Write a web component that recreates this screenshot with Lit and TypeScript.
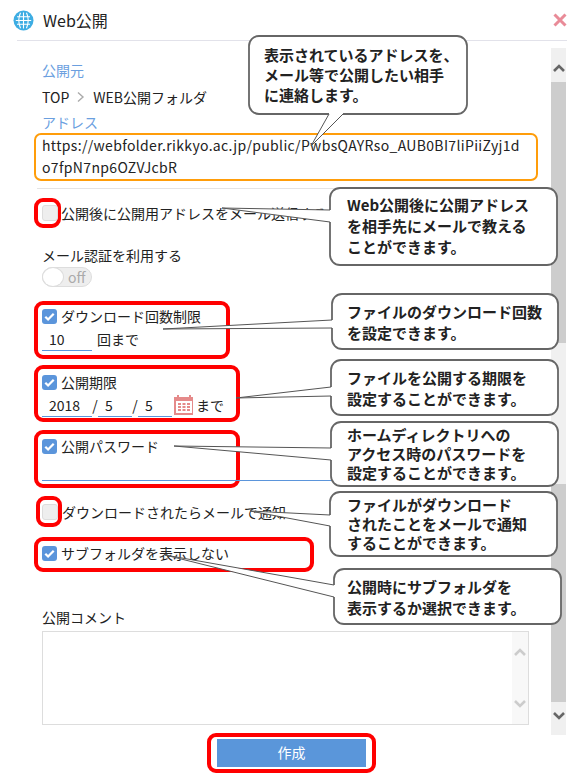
import { LitElement, html, css, svg } from "lit";
import { customElement } from "lit/decorators.js";

interface Callout { x: number; y: number; w: number; h: number; lines: string[]; a: number[]; tip: number[]; b: number[]; lh: number; py: number; tx: number; }

const callouts: Callout[] = [
  { x: 249, y: 36, w: 218, h: 78, tx: 15, py: 9, lh: 20, lines: ["表示されているアドレスを、", "メール等で公開したい相手", "に連絡します。"], a: [329, 114], tip: [311, 146], b: [343, 114] },
  { x: 330, y: 188, w: 227, h: 77, tx: 17, py: 6, lh: 21, lines: ["Web公開後に公開アドレス", "を相手先にメールで教える", "ことができます。"], a: [330, 210], tip: [222, 208], b: [330, 222] },
  { x: 332, y: 294, w: 226, h: 55, tx: 15, py: 7, lh: 21, lines: ["ファイルのダウンロード回数", "を設定できます。"], a: [332, 320], tip: [163, 329], b: [332, 328] },
  { x: 331, y: 360, w: 227, h: 55, tx: 16, py: 7, lh: 21, lines: ["ファイルを公開する期限を", "設定することができます。"], a: [331, 387], tip: [236, 398], b: [331, 396] },
  { x: 331, y: 422, w: 227, h: 64, tx: 16, py: 3, lh: 19, lines: ["ホームディレクトリへの", "アクセス時のパスワードを", "設定することができます。"], a: [331, 448], tip: [174, 446], b: [331, 460] },
  { x: 330, y: 492, w: 227, h: 64, tx: 17, py: 3, lh: 19, lines: ["ファイルがダウンロード", "されたことをメールで通知", "することができます。"], a: [330, 515], tip: [250, 511], b: [330, 526] },
  { x: 334, y: 569, w: 227, h: 55, tx: 13, py: 7, lh: 21, lines: ["公開時にサブフォルダを", "表示するか選択できます。"], a: [334, 585], tip: [165, 555], b: [334, 597] },
];

@customElement("app-root")
export class AppRoot extends LitElement {
  static styles = css`
    :host { display: block; position: relative; width: 582px; height: 778px; background: #fff; overflow: hidden;
      font-family: "Noto Sans CJK JP", "Noto Sans", sans-serif; font-size: 14px; color: #222; line-height: 20px; }
    .header { display: flex; align-items: center; height: 40px; padding-left: 13px; padding-right: 15px; gap: 9px; box-sizing: border-box; }
    .title { font-size: 16px; flex: 1; }
    .rule { height: 1px; margin-left: 17px; width: 550px; background: #e2e2ea; }
    .body { display: flex; margin-top: 7px; }
    .left { width: 551px; flex: none; }
    .content { padding-left: 42px; display: flex; flex-direction: column; align-items: flex-start; }
    .blue { color: #6b9fdf; }
    .crumb { display: flex; align-items: center; gap: 7px; }
    .url { margin-left: -8px; width: 504px; height: 48px; box-sizing: border-box; border: 2px solid #ff9d0a; border-radius: 7px; padding: 0 0 2px 6px; line-height: 22px; display: flex; align-items: center; letter-spacing: 0.34px; white-space: nowrap; }
    .sep { height: 1px; background: #e4e4e4; width: 514px; margin-left: -5px; }
    .row { display: flex; align-items: center; white-space: nowrap; }
    .hl { border: 4px solid #f00; border-radius: 9px; box-sizing: border-box; margin-left: -8px; padding-left: 4px; }
    .mini { width: 27px; height: 30px; display: flex; align-items: center; flex: none; }
    .mini2 { height: 31px; width: 26px; margin-left: -6px; padding-left: 2px; }
    .box { width: 15px; height: 15px; border-radius: 3px; background: #5b95db; display: block; flex: none; }
    .off { width: 16px; height: 16px; border-radius: 3px; background: #eee; border: 1px solid #ddd; box-sizing: border-box; flex: none; }
    .toggle { width: 50px; height: 20px; border-radius: 10px; background: #eee; border: 1px solid #ddd; box-sizing: border-box; display: flex; align-items: center; color: #aaa; font-size: 14px; }
    .knob { width: 20px; height: 18px; background: #fff; border-radius: 50%; margin-right: 5px; box-shadow: 0 0 0 1px #ddd; }
    .checkline { display: flex; align-items: center; gap: 4px; height: 20px; }
    .inputs { display: flex; align-items: center; height: 25px; white-space: nowrap; }
    .field { height: 22px; border-bottom: 1px solid #5b95db; padding: 2px 0 0 7px; line-height: 22px; }
    .w50 { width: 43px; } .w34 { width: 27px; }
    .slash { width: 6px; text-align: center; }
    .pw { width: 487px; height: 24px; padding: 0; margin-left: 0; }
    .comment { width: 487px; height: 94px; border: 1px solid #ddd; box-sizing: border-box; display: flex; justify-content: flex-end; }
    .cbar { width: 16px; background: #f8f8f8; display: flex; flex-direction: column; align-items: center; justify-content: space-between; padding: 14px 0 14px; box-sizing: border-box; }
    .footer { display: flex; padding-left: 207px; margin-top: 8px; }
    .btnwrap { width: 169px; height: 40px; border: 4px solid #f00; border-radius: 9px; box-sizing: border-box; padding: 2px 6px; }
    .btn { display: flex; align-items: center; justify-content: center; height: 100%; box-sizing: border-box; padding-bottom: 2px; background: #5a96da; color: #fff; font-size: 14px; }
    .scroll { width: 15px; height: 687px; background: #f0f0f0; display: flex; flex-direction: column; flex: none; }
    .arrow { display: flex; justify-content: center; align-items: center; flex: none; height: 34px; box-sizing: border-box; padding-top: 8px; }
    .arrow.bottom { height: 33px; padding: 0 0 8px; }
    .thumb { background: #cdcdcd; flex: none; }
    .gap { flex: none; }
    .cal { margin: 0 2px; flex: none; }
    .overlay { position: absolute; left: 0; top: 0; width: 582px; height: 778px; pointer-events: none; }
    .bubble { position: absolute; font-weight: 700; font-size: 15px; color: #222; white-space: nowrap; }
  `;

  private check() {
    return html`<svg class="box" viewBox="0 0 16 16"><path d="M3.5 8.2l3 3 6-6.2" fill="none" stroke="#fff" stroke-width="2.4"/></svg>`;
  }
  private chevron(dir: "up" | "down", color: string) {
    const d = dir === "up" ? "M2 9l5-5 5 5" : "M2 5l5 5 5-5";
    return html`<svg width="14" height="14" viewBox="0 0 14 14"><path d=${d} fill="none" stroke=${color} stroke-width="2.6"/></svg>`;
  }
  private tails() {
    return svg`${callouts.map((c) => svg`
      <rect x=${c.x} y=${c.y} width=${c.w} height=${c.h} rx="10" fill="#fff" stroke="#666" stroke-width="1.8"/>
      <polygon points="${c.a.join(",")} ${c.tip.join(",")} ${c.b.join(",")}" fill="#fff" stroke="none"/>
      <line x1=${c.a[0]} y1=${c.a[1]} x2=${c.b[0]} y2=${c.b[1]} stroke="#fff" stroke-width="2.8"/>
      <polyline points="${c.a.join(",")} ${c.tip.join(",")} ${c.b.join(",")}" fill="none" stroke="#555" stroke-width="1"/>
    `)}`;
  }

  render() {
    return html`
      <div class="header">
        <svg width="21" height="21" viewBox="0 0 21 21"><circle cx="10.5" cy="10.5" r="10" fill="#3dade3"/>
          <g fill="none" stroke="#fff" stroke-width="1.1"><path d="M7.5 2.8Q4 10.5 7.5 18.2M13.5 2.8Q17 10.5 13.5 18.2M10.5 2.5v16M4 6.8h13M2.8 10.5h15.4M4 14.2h13"/></g></svg>
        <span class="title">Web公開</span>
        <svg width="14" height="14" viewBox="0 0 14 14"><path d="M1.5 1.5l11 11M12.5 1.5l-11 11" stroke="#e98b98" stroke-width="3"/></svg>
      </div>
      <div class="rule"></div>
      <div class="body">
        <div class="left">
          <div class="content">
            <div class="blue" style="margin-top:12px">公開元</div>
            <div class="crumb" style="margin-top:7px">TOP
              <svg width="10" height="12" viewBox="0 0 10 12"><path d="M2 1.5L7 6l-5 4.5" fill="none" stroke="#aaa" stroke-width="1.4"/></svg>
              <span>WEB公開フォルダ</span></div>
            <div class="blue" style="margin-top:5px">アドレス</div>
            <div class="url" style="margin-top:1px"><span>https://webfolder.rikkyo.ac.jp/public/PwbsQAYRso_AUB0BI7liPiiZyj1d<br>o7fpN7np6OZVJcbR</span></div>
            <div class="sep" style="margin-top:7px"></div>

            <div class="row" style="margin-top:9px;height:30px">
              <div class="hl mini"><span class="off"></span></div>
              <span>公開後に公開用アドレスをメール送信する</span>
            </div>

            <div style="margin-top:17px">メール認証を利用する</div>
            <div class="toggle" style="margin-top:2px"><span class="knob"></span>off</div>

            <div class="hl" style="margin-top:14px;width:196px;height:58px;padding-top:1px">
              <div class="checkline">${this.check()}<span>ダウンロード回数制限</span></div>
              <div class="inputs"><span class="field w50">10</span><span style="margin-left:5px">回まで</span></div>
            </div>

            <div class="hl" style="margin-top:6px;width:206px;height:57px;padding-top:3px">
              <div class="checkline">${this.check()}<span>公開期限</span></div>
              <div class="inputs"><span class="field w50">2018</span><span class="slash">/</span>
                <span class="field w34">5</span><span class="slash">/</span><span class="field w34">5</span>
                <svg class="cal" width="20" height="21" viewBox="0 0 20 21"><path fill="#e58a8a" d="M1 3h2V1h2v2h10V1h2v2h2v18H0V3z"/><path fill="#fff" d="M2 7h16v12H2z"/><path fill="#e58a8a" d="M4 9h3v2H4zM8.5 9h3v2h-3zM13 9h3v2h-3zM4 12h3v2H4zM8.5 12h3v2h-3zM13 12h3v2h-3zM4 15h3v2H4zM8.5 15h3v2h-3zM13 15h3v2h-3z"/></svg>
                <span>まで</span></div>
            </div>

            <div class="hl" style="margin-top:8px;width:206px;height:58px;padding-top:2px">
              <div class="checkline">${this.check()}<span>公開パスワード</span></div>
              <div class="field pw"></div>
            </div>

            <div class="row" style="margin-top:8px;height:31px">
              <div class="hl mini mini2"><span class="off"></span></div>
              <span>ダウンロードされたらメールで通知</span>
            </div>

            <div class="hl" style="margin-top:10px;width:280px;height:35px;padding-top:2px">
              <div class="checkline">${this.check()}<span>サブフォルダを表示しない</span></div>
            </div>

            <div style="margin-top:35px">公開コメント</div>
            <div class="comment" style="margin-top:4px">
              <div class="cbar">${this.chevron("up", "#ccc")}${this.chevron("down", "#ccc")}</div>
            </div>
          </div>
          <div class="footer"><div class="btnwrap"><div class="btn">作成</div></div></div>
        </div>
        <div class="scroll">
          <div class="arrow">${this.chevron("up", "#666")}</div>
          <div class="thumb" style="height:261px"></div>
          <div class="gap" style="height:141px"></div>
          <div class="thumb" style="height:218px"></div>
          <div class="arrow bottom">${this.chevron("down", "#666")}</div>
        </div>
      </div>
      <svg class="overlay" viewBox="0 0 582 778">${this.tails()}</svg>
      ${callouts.map((c) => html`<div class="bubble" style="left:${c.x + c.tx}px;top:${c.y + c.py}px;line-height:${c.lh}px">${c.lines.map((l) => html`<div>${l}</div>`)}</div>`)}
    `;
  }
}
